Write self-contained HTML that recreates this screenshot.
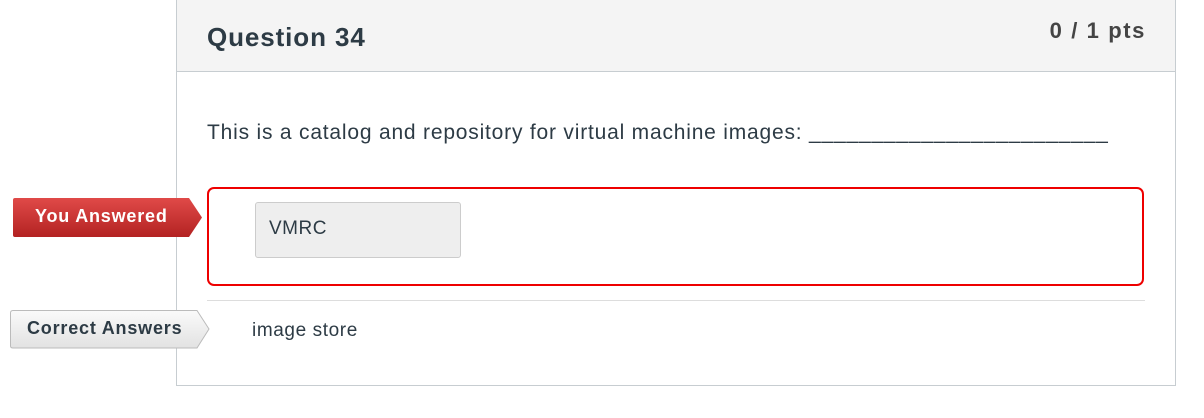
<!DOCTYPE html>
<html><head><style>
body{margin:0;width:1204px;height:418px;background:#fff;font-family:"Liberation Sans",sans-serif;color:#2d3b45;position:relative;overflow:hidden}
.box{position:absolute;left:176px;top:-2px;width:998px;height:386px;border:1px solid #c7cdd1;}
.hdr{position:absolute;left:0;top:0;width:998px;height:72px;background:#f4f4f4;border-bottom:1px solid #c7cdd1}
.t{position:absolute;left:30px;top:23px;font-size:26px;font-weight:bold;color:#2d3b45;letter-spacing:0.9px}
.pts{position:absolute;right:29px;top:19px;font-size:22px;font-weight:bold;color:#444;letter-spacing:1.6px}
.q{position:absolute;left:207px;top:121px;font-size:21px;letter-spacing:0.8px}
.red{position:absolute;left:207px;top:187px;width:933px;height:95px;border:2px solid #e00;border-radius:7px}
.inp{position:absolute;left:255px;top:202px;width:206px;height:56px;background:#eee;border:1px solid #ccc;border-radius:3px;box-sizing:border-box;font-size:19px;padding:15px 0 0 13px;letter-spacing:0.5px}
.div{position:absolute;left:207px;top:300px;width:938px;height:1px;background:#ddd}
.ans{position:absolute;left:252px;top:320px;font-size:19px;letter-spacing:0.6px}
.tag{position:absolute;font-weight:bold;font-size:18px;letter-spacing:0.8px}
</style></head><body>
<div class="box"><div class="hdr"><div class="t">Question 34</div><div class="pts">0 / 1 pts</div></div></div>
<div class="q">This is a catalog and repository for virtual machine images: ________________________</div>
<svg style="position:absolute;left:12px;top:197px" width="192" height="43"><defs><linearGradient id="r" x1="0" y1="0" x2="0" y2="1"><stop offset="0" stop-color="#e04a48"/><stop offset="1" stop-color="#b32222"/></linearGradient></defs><path d="M1 3Q1 1 3 1H177L190 20.5L177 40H3Q1 40 1 38Z" fill="url(#r)"/></svg>
<div class="tag" style="left:35px;top:206px;color:#fff">You Answered</div>
<svg style="position:absolute;left:9px;top:309px" width="204" height="42"><defs><linearGradient id="g" x1="0" y1="0" x2="0" y2="1"><stop offset="0" stop-color="#fafafa"/><stop offset="1" stop-color="#e2e2e2"/></linearGradient></defs><path d="M1.5 4Q1.5 1.5 4 1.5H188L200 20L188 39H4Q1.5 39 1.5 37Z" fill="url(#g)" stroke="#bbb"/></svg>
<div class="tag" style="left:27px;top:318px;color:#2d3b45">Correct Answers</div>
<div class="red"></div>
<div class="inp">VMRC</div>
<div class="div"></div>
<div class="ans">image store</div>
</body></html>
